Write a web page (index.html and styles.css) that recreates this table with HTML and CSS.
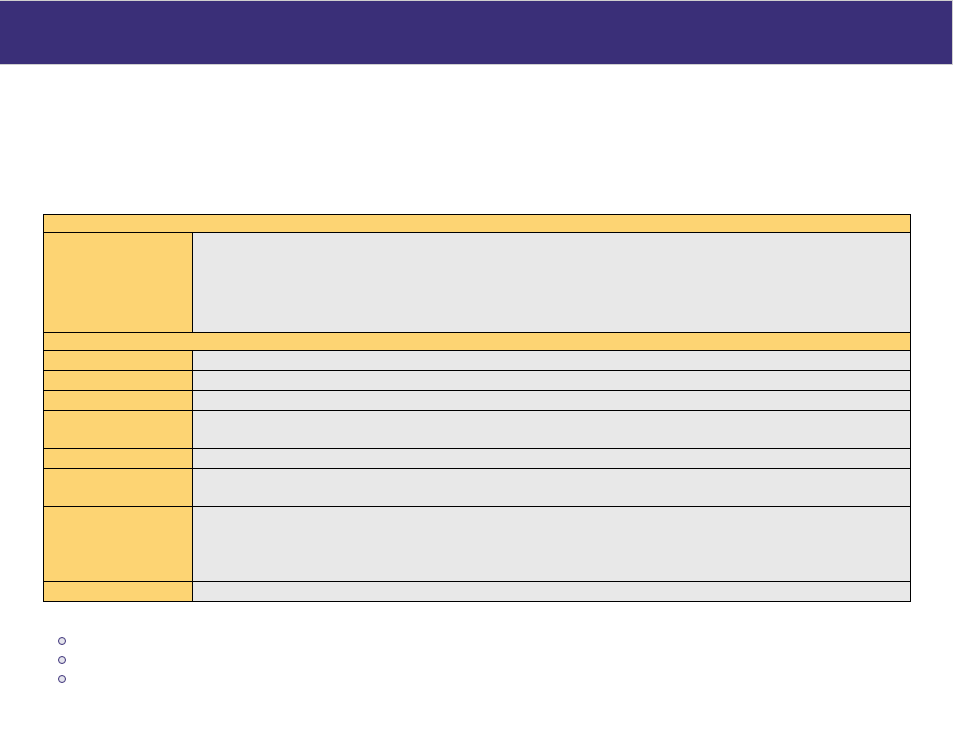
FILE: index.html
```html
<!DOCTYPE html>
<html>
<head>
<meta charset="utf-8">
<link rel="stylesheet" href="styles.css">
</head>
<body>
<header class="banner"></header>
<main class="content">
  <div class="grid">
    <div class="cell head span"></div>
    <div class="cell label h99"></div><div class="cell value h99"></div>
    <div class="cell head span"></div>
    <div class="cell label"></div><div class="cell value"></div>
    <div class="cell label"></div><div class="cell value"></div>
    <div class="cell label"></div><div class="cell value"></div>
    <div class="cell label h37"></div><div class="cell value h37"></div>
    <div class="cell label"></div><div class="cell value"></div>
    <div class="cell label h37"></div><div class="cell value h37"></div>
    <div class="cell label h74"></div><div class="cell value h74"></div>
    <div class="cell label"></div><div class="cell value"></div>
  </div>
  <ul class="bullets">
    <li><span class="dot"></span></li>
    <li><span class="dot"></span></li>
    <li><span class="dot"></span></li>
  </ul>
</main>
</body>
</html>
```
FILE: styles.css
```css
html, body {
  margin: 0;
  padding: 0;
  background: #ffffff;
  font-family: "Liberation Sans", Arial, sans-serif;
}
.banner {
  height: 63px;
  width: 952px;
  background: #3a2f78;
  border-top: 1px solid #cfcfcf;
  border-bottom: 1px solid #cfcfcf;
  border-right: 1px solid #cfcfcf;
}
.content {
  padding: 149px 0 0 43px;
}
.grid {
  display: grid;
  grid-template-columns: 148px 717px;
  gap: 1px;
  padding: 1px;
  background: #000000;
  width: 866px;
}
.cell {
  height: 19px;
}
.cell.head {
  height: 17px;
  background: #fdd473;
}
.span {
  grid-column: 1 / 3;
}
.label {
  background: #fdd473;
}
.value {
  background: #e8e8e8;
}
.h99 { height: 99px; }
.h37 { height: 37px; }
.h74 { height: 74px; }
.bullets {
  list-style: none;
  margin: 35px 0 0 0;
  padding: 0 0 0 15px;
  display: flex;
  flex-direction: column;
}
.bullets li {
  height: 19px;
  display: flex;
  align-items: flex-start;
}
.dot {
  width: 6px;
  height: 6px;
  border: 1.6px solid #3a2f78;
  border-radius: 50%;
  background: #e4e4ec;
}
```
